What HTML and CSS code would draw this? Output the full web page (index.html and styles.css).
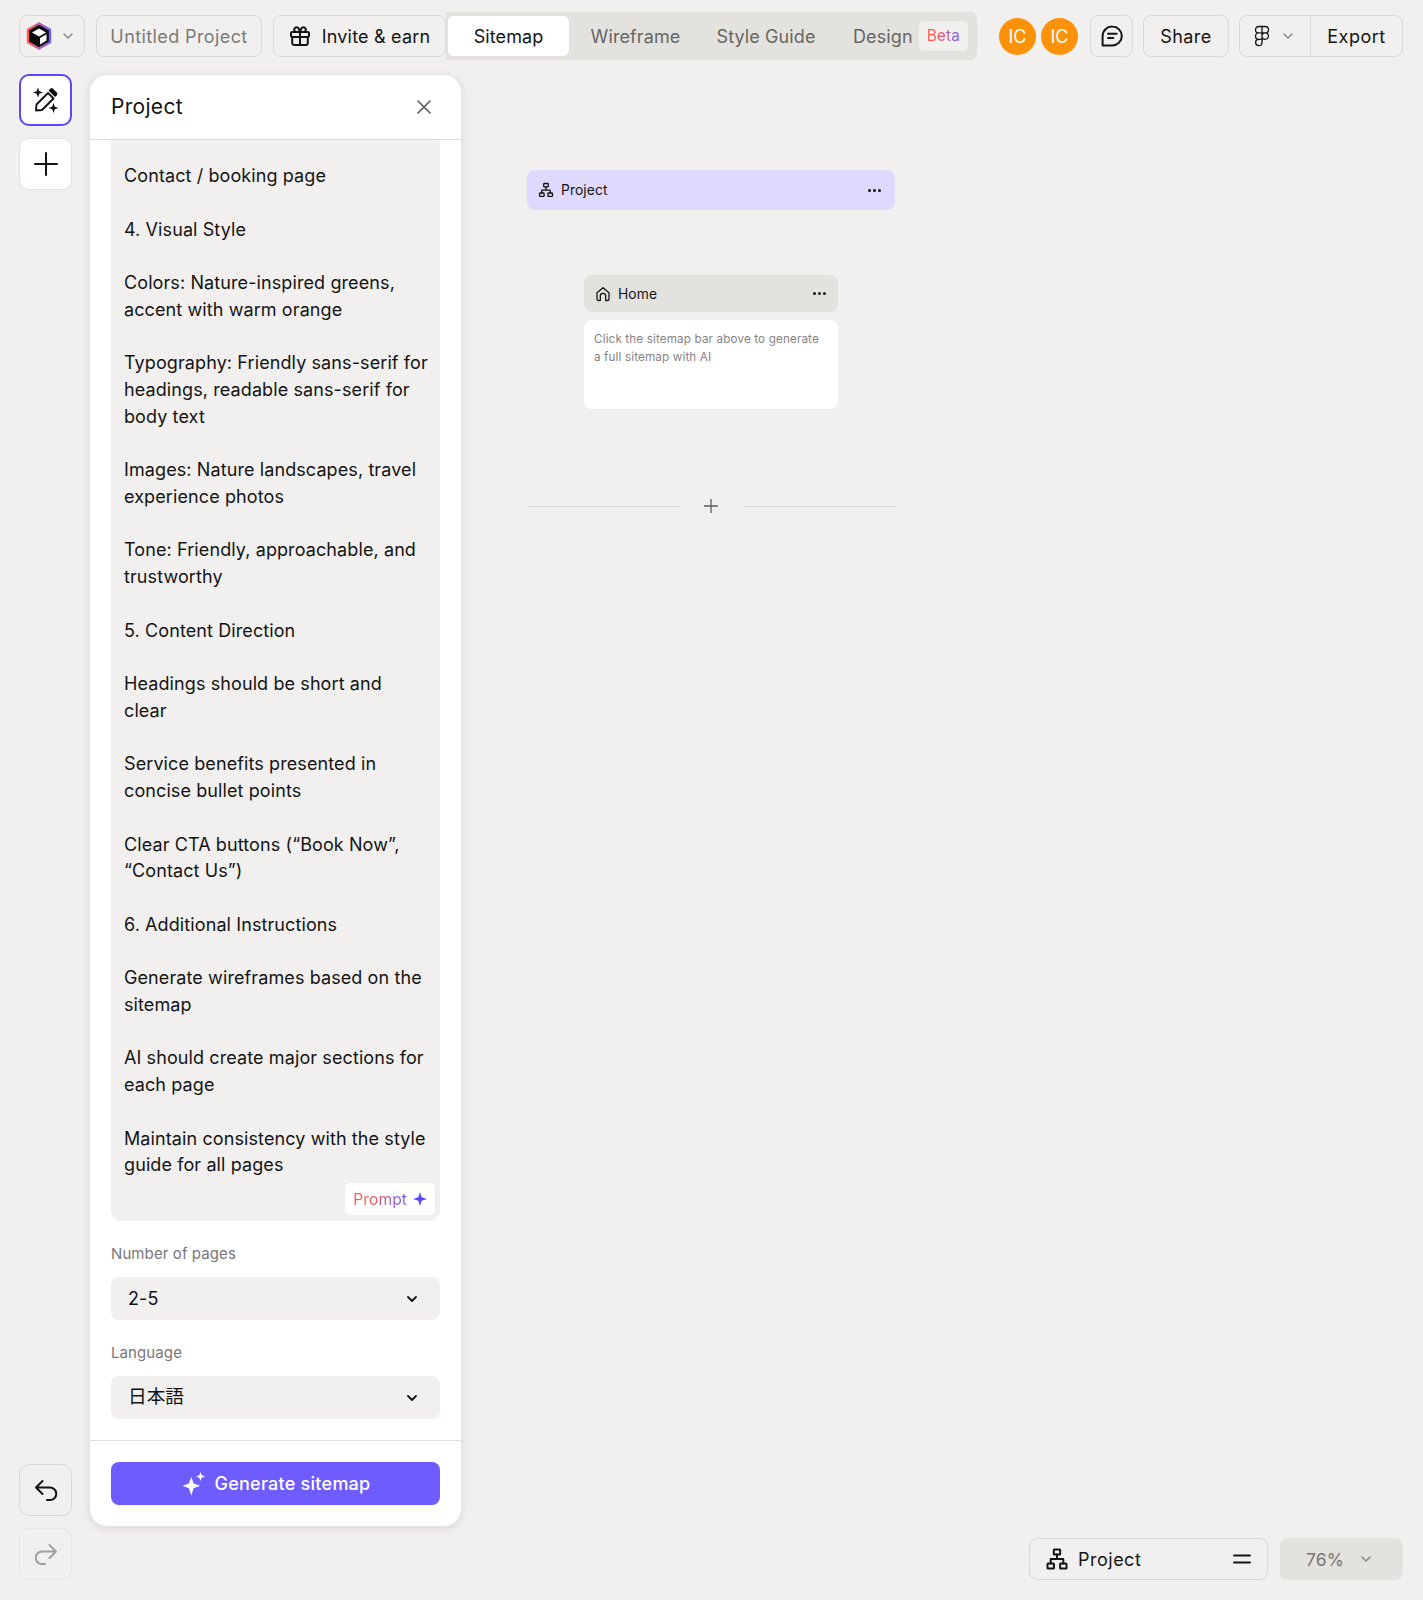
FILE: index.html
```html
<!DOCTYPE html>
<html>
<head>
<meta charset="utf-8">
<title>Untitled Project - Sitemap</title>
<link rel="stylesheet" href="styles.css">
</head>
<body>
<svg class="defs" width="0" height="0">
  <defs>
    <linearGradient id="brand" x1="0" y1="0" x2="1" y2="0">
      <stop offset="0" stop-color="#ff5a4f"/>
      <stop offset="1" stop-color="#6c5cff"/>
    </linearGradient>
  </defs>
</svg>
<div class="app">
  <header class="topbar">
    <button class="btn logo-btn">
      <svg width="26" height="28" viewBox="0 0 26 28">
        <path d="M13 1.5 24 7.8v12.4L13 26.5 2 20.2V7.8z" fill="#0b0b0b" stroke="url(#brand)" stroke-width="2.4" stroke-linejoin="round"/>
        <path d="M13 6.5 20 10.5 13 14.5 6 10.5z" fill="#fff"/>
        <path d="M14 16 20.5 12.3V18.6L14 22.4z" fill="#fff"/>
      </svg>
      <svg class="chev" width="12" height="12" viewBox="0 0 12 12"><path d="M2 4l4 4 4-4"/></svg>
    </button>
    <button class="btn muted project-name">Untitled Project</button>
    <button class="btn invite">
      <svg class="ico" width="22" height="22" viewBox="0 0 22 22">
        <rect x="2" y="7" width="18" height="5" rx="1.2"/>
        <path d="M3.2 12v6a2 2 0 0 0 2 2h11.6a2 2 0 0 0 2-2v-6M11 7v13M11 7H7.6a2.4 2.4 0 1 1 2-3.7zM11 7h3.4a2.4 2.4 0 1 0-2-3.7z"/>
      </svg>
      Invite &amp; earn
    </button>
    <nav class="tabs">
      <a class="tab active">Sitemap</a>
      <a class="tab">Wireframe</a>
      <a class="tab">Style Guide</a>
      <a class="tab tab-design">Design <span class="beta"><span class="grad">Beta</span></span></a>
    </nav>
    <div class="avatars">
      <span class="avatar">IC</span>
      <span class="avatar">IC</span>
    </div>
    <button class="btn comment">
      <svg class="ico" width="24" height="24" viewBox="0 0 24 24">
        <path d="M12.4 2.6a9.4 9.4 0 1 1 0 18.8H2.6v-9.4a9.4 9.4 0 0 1 9.800-9.400z"/>
        <path d="M8 9.700h8.600M8 14h5.400"/>
      </svg>
    </button>
    <button class="btn share">Share</button>
    <div class="btn-group">
      <button class="figma">
        <svg class="ico thin" width="16" height="22" viewBox="0 0 16 22">
          <path d="M8 1.500H4.700a3.200 3.200 0 0 0 0 6.400H8zM8 1.500h3.300a3.200 3.200 0 0 1 0 6.400H8zM8 7.900H4.700a3.200 3.200 0 0 0 0 6.400H8zM8 14.300H4.700A3.200 3.200 0 1 0 8 17.500zM14.500 11.100a3.250 3.250 0 1 1-6.500 0 3.250 3.250 0 0 1 6.500 0z"/>
        </svg>
        <svg class="chev" width="12" height="12" viewBox="0 0 12 12"><path d="M2 4l4 4 4-4"/></svg>
      </button>
      <button class="export">Export</button>
    </div>
  </header>

  <div class="main">
    <aside class="rail">
      <button class="tool selected">
        <svg class="ico wand" width="28" height="28" viewBox="0 0 28 28">
          <path d="M4 24.500 4.500 18.500 16 7l5.500 5.500L10 24z"/>
          <path class="solid" d="M16.500 4.500l1.800-1.800a2 2 0 0 1 2.800 0l3.700 3.700a2 2 0 0 1 0 2.800L23 11z"/>
          <path class="solid" d="M6 1.500l1.300 3.700L11 6.500 7.300 7.800 6 11.500 4.700 7.800 1 6.500l3.700-1.300zM21.500 17l1.300 3.700 3.700 1.300-3.700 1.300-1.300 3.700-1.300-3.700-3.700-1.300 3.700-1.300z"/>
        </svg>
      </button>
      <button class="tool">
        <svg class="ico" width="26" height="26" viewBox="0 0 26 26"><path d="M13 2v22M2 13h22"/></svg>
      </button>
      <button class="tool history">
        <svg class="ico" width="26" height="26" viewBox="0 0 26 26"><path d="M9.500 4 3 10.500 9.500 17M3 10.500h14a6.200 6.200 0 0 1 0 12.500h-3"/></svg>
      </button>
      <button class="tool disabled">
        <svg class="ico" width="26" height="26" viewBox="0 0 26 26"><path d="M16.500 4 23 10.500 16.500 17M23 10.500H9a6.200 6.200 0 0 0 0 12.500h3"/></svg>
      </button>
    </aside>

    <section class="panel">
      <div class="panel-head">
        <h2>Project</h2>
        <svg class="close" width="14" height="14" viewBox="0 0 14 14"><path d="M1 1l12 12M13 1 1 13"/></svg>
      </div>
      <div class="panel-body">
        <div class="prompt-box">
          <div class="prompt-text">
            <p>Contact / booking page</p>
            <p>4. Visual Style</p>
            <p>Colors: Nature-inspired greens,<br>accent with warm orange</p>
            <p>Typography: Friendly sans-serif for<br>headings, readable sans-serif for<br>body text</p>
            <p>Images: Nature landscapes, travel<br>experience photos</p>
            <p>Tone: Friendly, approachable, and<br>trustworthy</p>
            <p>5. Content Direction</p>
            <p>Headings should be short and<br>clear</p>
            <p>Service benefits presented in<br>concise bullet points</p>
            <p>Clear CTA buttons (“Book Now”,<br>“Contact Us”)</p>
            <p>6. Additional Instructions</p>
            <p>Generate wireframes based on the<br>sitemap</p>
            <p>AI should create major sections for<br>each page</p>
            <p>Maintain consistency with the style<br>guide for all pages</p>
          </div>
          <span class="prompt-chip">
            <span class="grad">Prompt</span>
            <svg width="14" height="14" viewBox="0 0 14 14"><path d="M7 0l1.700 5.300L14 7l-5.300 1.700L7 14 5.300 8.700 0 7l5.300-1.700z" fill="#5b45ff"/></svg>
          </span>
        </div>
        <label class="field-label">Number of pages</label>
        <div class="select">
          <span>2-5</span>
          <svg class="chev dark" width="14" height="14" viewBox="0 0 14 14"><path d="M3 5l4 4 4-4"/></svg>
        </div>
        <label class="field-label">Language</label>
        <div class="select">
          <span class="cjk">日本語</span>
          <svg class="chev dark" width="14" height="14" viewBox="0 0 14 14"><path d="M3 5l4 4 4-4"/></svg>
        </div>
      </div>
      <div class="panel-foot">
        <button class="generate">
          <svg width="26" height="26" viewBox="0 0 24 24" fill="#fff">
            <path d="M9.500 5.500l2.200 6 6 2.200-6 2.200-2.200 6.600-2.200-6.600-6-2.200 6-2.200z"/>
            <path d="M18 1l1.100 3 3 1.100-3 1.100-1.100 3-1.100-3-3-1.100 3-1.100z"/>
          </svg>
          Generate sitemap
        </button>
      </div>
    </section>

    <section class="canvas">
      <div class="sitemap">
        <div class="root-node">
          <svg class="ico thin" width="16" height="16" viewBox="0 0 16 16">
            <rect x="5.700" y="1.500" width="4.600" height="3.400" rx=".6"/>
            <rect x="1.500" y="11" width="4.600" height="3.400" rx=".6"/>
            <rect x="9.900" y="11" width="4.600" height="3.400" rx=".6"/>
            <path d="M8 5v3.200M3.800 11V8.200h8.400V11"/>
          </svg>
          <span class="node-name">Project</span>
          <span class="dots"><i></i><i></i><i></i></span>
        </div>
        <div class="page-node">
          <div class="page-head">
            <svg class="ico thin" width="16" height="16" viewBox="0 0 16 16">
              <path d="M2 6.800 8 1.700l6 5.100v6.400a1.300 1.300 0 0 1-1.300 1.300h-2V10a2.700 2.700 0 0 0-5.400 0v4.500h-2A1.300 1.300 0 0 1 2 13.200z"/>
            </svg>
            <span class="node-name">Home</span>
            <span class="dots"><i></i><i></i><i></i></span>
          </div>
          <div class="page-card">Click the sitemap bar above to generate a full sitemap with AI</div>
        </div>
        <div class="add-row">
          <span class="line"></span>
          <svg class="add" width="14" height="14" viewBox="0 0 14 14"><path d="M7 0v14M0 7h14"/></svg>
          <span class="line"></span>
        </div>
      </div>
      <div class="bottom-tools">
        <div class="btn layer-btn">
          <svg class="ico" width="22" height="22" viewBox="0 0 22 22">
            <rect x="7.800" y="1.500" width="6.400" height="5" rx=".5"/>
            <rect x="1.500" y="15.500" width="6.400" height="5" rx=".5"/>
            <rect x="14.100" y="15.500" width="6.400" height="5" rx=".5"/>
            <path d="M11 6.500V11M4.700 15.500V11h12.600v4.500"/>
          </svg>
          <span class="layer-name">Project</span>
          <svg class="ico" width="18" height="10" viewBox="0 0 18 10"><path d="M1 1.500h16M1 8.500h16"/></svg>
        </div>
        <div class="zoom-btn">
          76%
          <svg class="chev" width="12" height="12" viewBox="0 0 12 12"><path d="M2 4l4 4 4-4"/></svg>
        </div>
      </div>
    </section>
  </div>
</div>
</body>
</html>
```
FILE: styles.css
```css
* {
    box-sizing: border-box;
}
html, body {
    margin: 0;
    height: 1600px;
    overflow: hidden;
}
body {
    background: #f1f0ee;
    color: #141414;
    font-family: Inter, "Noto Sans CJK JP", sans-serif;
    font-size: 18px;
    letter-spacing: 0.1px;
}
button {
    font: inherit;
    letter-spacing: inherit;
    color: inherit;
    background: none;
    border: 0;
    padding: 0;
}
.defs {
    position: absolute;
}
.app {
    display: flex;
    flex-direction: column;
    height: 1600px;
    padding: 12px 20px 20px 19px;
    gap: 14px;
}

/* icons */
.ico {
    fill: none;
    stroke: #141414;
    stroke-width: 2;
    stroke-linecap: round;
    stroke-linejoin: round;
    flex: none;
}
.ico.thin {
    stroke-width: 1.3;
}
.ico .solid {
    fill: #111;
    stroke: none;
}
.chev {
    fill: none;
    stroke: #8a8986;
    stroke-width: 1.6;
    stroke-linecap: round;
    stroke-linejoin: round;
    flex: none;
}
.chev.dark {
    stroke: #141414;
    stroke-width: 1.8;
}
.grad {
    background: linear-gradient(90deg, #ff5a4f 30%, #6c5cff 100%);
    -webkit-background-clip: text;
    background-clip: text;
    color: transparent;
}

/* top bar */
.topbar {
    display: flex;
    align-items: center;
    height: 48px;
}
.btn {
    display: flex;
    align-items: center;
    height: 42px;
    border: 1.5px solid #d9d8d4;
    border-radius: 8px;
    background: #f1f0ee;
}
.logo-btn {
    width: 66px;
    padding-left: 6px;
    gap: 10px;
    margin-right: 11px;
}
.project-name {
    width: 166px;
    justify-content: center;
    margin-right: 11px;
    letter-spacing: 0.4px;
}
.muted {
    color: #7b7a77;
}
.invite {
    width: 173px;
    justify-content: center;
    gap: 11px;
    letter-spacing: 0.2px;
}
.tabs {
    display: flex;
    align-items: center;
    width: 531px;
    height: 48px;
    padding: 4px 2px;
    background: #e3e2de;
    border-radius: 0 6px 6px 0;
    color: #676663;
}
.tab {
    display: flex;
    align-items: center;
    justify-content: center;
    height: 40px;
    white-space: nowrap;
}
.tab.active {
    width: 121px;
    margin-right: 22px;
    background: #fff;
    border-radius: 6px;
    color: #141414;
}
.tab:nth-child(2) {
    width: 89px;
    margin-right: 37px;
}
.tab:nth-child(3) {
    width: 98px;
    margin-right: 38px;
}
.tab-design {
    gap: 6px;
}
.beta {
    display: block;
    padding: 6px 8px;
    background: #f1f0ee;
    border-radius: 5px;
    font-size: 15.500px;
    line-height: 18px;
}
.avatars {
    display: flex;
    gap: 5px;
    margin: 0 12px 0 22px;
}
.avatar {
    display: flex;
    align-items: center;
    justify-content: center;
    width: 37px;
    height: 37px;
    border-radius: 50%;
    background: #fb9209;
    color: #fff;
}
.comment {
    width: 43px;
    justify-content: center;
    margin-right: 10px;
}
.share {
    width: 86px;
    justify-content: center;
    margin-right: 10px;
    letter-spacing: 0.4px;
}
.btn-group {
    display: flex;
    height: 42px;
    border: 1.5px solid #d9d8d4;
    border-radius: 8px;
}
.figma {
    display: flex;
    align-items: center;
    justify-content: center;
    gap: 12px;
    width: 71px;
    padding-right: 2px;
    border-right: 1.5px solid #d9d8d4;
}
.export {
    width: 91px;
    letter-spacing: 0.5px;
}

/* main row */
.main {
    flex: 1;
    display: flex;
    min-height: 0;
}
.rail {
    display: flex;
    flex-direction: column;
    gap: 12px;
    width: 53px;
    margin-right: 17px;
}
.tool {
    display: flex;
    align-items: center;
    justify-content: center;
    width: 53px;
    height: 52px;
    background: #fff;
    border: 1.5px solid #e4e3e0;
    border-radius: 10px;
}
.tool.selected {
    border: 2px solid #5b45ff;
}
.tool.history {
    margin-top: auto;
    background: #f1f0ee;
    border-color: #d9d8d4;
}
.tool.disabled {
    background: #f1f0ee;
    border-color: #e5e4e1;
}
.tool.disabled .ico {
    stroke: #a09f9b;
}
.wand {
    stroke-width: 1.9;
}

/* project panel */
.panel {
    display: flex;
    flex-direction: column;
    width: 373px;
    height: 1453px;
    background: #fff;
    border: 1px solid #e6e5e2;
    border-radius: 18px;
    box-shadow: 0 2px 8px rgba(0, 0, 0, 0.1);
    overflow: hidden;
}
.panel-head {
    display: flex;
    align-items: center;
    justify-content: space-between;
    flex: none;
    height: 65px;
    padding: 0 30px 0 21px;
    border-bottom: 1px solid #dfdedb;
}
.panel-head h2 {
    margin: 0 0 2px;
    font-size: 21px;
    font-weight: 400;
    letter-spacing: 0.3px;
}
.close {
    fill: none;
    stroke: #5f5e5b;
    stroke-width: 1.7;
    stroke-linecap: round;
}
.panel-body {
    flex: 1;
    display: flex;
    flex-direction: column;
    min-height: 0;
    padding: 0 21px;
}
.prompt-box {
    position: relative;
    flex: none;
    height: 1081px;
    padding: 23px 13px 0;
    background: #f1f0ee;
    border-radius: 0 0 10px 10px;
    overflow: hidden;
}
.prompt-text p {
    margin: 0 0 27px;
    line-height: 26.600px;
    white-space: nowrap;
}
.prompt-chip {
    position: absolute;
    right: 5px;
    bottom: 6px;
    display: flex;
    align-items: center;
    gap: 6px;
    height: 32px;
    padding: 0 8px;
    background: #fff;
    border-radius: 5px;
    font-size: 15.600px;
}
.field-label {
    margin: 23px 0 13px;
    line-height: 20px;
    font-size: 15px;
    color: #77767a;
}
.select {
    display: flex;
    align-items: center;
    justify-content: space-between;
    flex: none;
    height: 43px;
    padding: 0 21px 0 17px;
    background: #f1f0ee;
    border-radius: 8px;
}
.cjk {
    font-size: 18.700px;
    line-height: 1;
    letter-spacing: 0;
}
.panel-foot {
    flex: none;
    height: 86px;
    padding: 21px;
    border-top: 1px solid #dfdedb;
}
.generate {
    display: flex;
    align-items: center;
    justify-content: center;
    gap: 8px;
    width: 100%;
    height: 43px;
    background: #6f5cff;
    border-radius: 8px;
    color: #fff;
    font-weight: 500;
    letter-spacing: 0.25px;
}

/* canvas */
.canvas {
    flex: 1;
    display: flex;
    flex-direction: column;
    justify-content: space-between;
    min-width: 0;
    padding: 96px 0 0 65px;
}
.sitemap {
    display: flex;
    flex-direction: column;
    width: 368px;
}
.root-node, .page-head {
    display: flex;
    align-items: center;
    gap: 7px;
    font-size: 13.800px;
}
.root-node {
    height: 40px;
    padding: 0 14px 0 11px;
    background: #dfd9fe;
    border-radius: 8px;
}
.node-name {
    flex: 1;
}
.dots {
    display: flex;
    gap: 2px;
}
.dots i {
    width: 3px;
    height: 3px;
    border-radius: 50%;
    background: #141414;
}
.page-node {
    width: 254px;
    margin: 65px 0 0 57px;
}
.page-head {
    height: 37px;
    padding: 0 12px 0 11px;
    background: #e3e2de;
    border-radius: 8px;
}
.page-card {
    height: 89px;
    margin-top: 8px;
    padding: 10px 14px 10px 10px;
    background: #fff;
    border-radius: 8px;
    font-size: 11.700px;
    line-height: 18px;
    letter-spacing: 0.13px;
    color: #858483;
}
.add-row {
    display: flex;
    align-items: center;
    justify-content: space-between;
    margin-top: 90px;
    height: 14px;
}
.line {
    width: 152px;
    height: 1px;
    background: #d6d5d1;
}
.add {
    fill: none;
    stroke: #5f5e5b;
    stroke-width: 1.300;
}
.bottom-tools {
    display: flex;
    justify-content: flex-end;
    gap: 12px;
}
.layer-btn {
    width: 239px;
    padding: 0 16px;
    gap: 10px;
}
.layer-name {
    flex: 1;
    letter-spacing: 0.5px;
}
.zoom-btn {
    display: flex;
    align-items: center;
    justify-content: center;
    gap: 16px;
    width: 123px;
    height: 42px;
    padding-right: 5px;
    background: #e3e2de;
    border-radius: 8px;
    color: #777673;
    font-size: 17.500px;
}
```
